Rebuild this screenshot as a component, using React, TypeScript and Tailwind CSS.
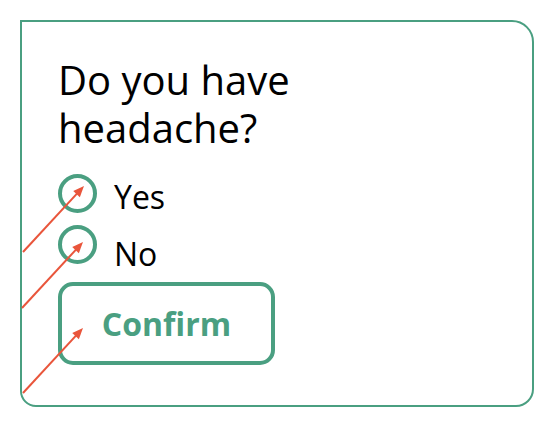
type Arrow = { x1: number; y1: number; x2: number; y2: number };

const arrows: Arrow[] = [
  { x1: 23, y1: 252, x2: 84, y2: 186 },
  { x1: 22, y1: 308, x2: 83, y2: 242 },
  { x1: 23, y1: 393, x2: 83, y2: 328 },
];

function ArrowMark({ x1, y1, x2, y2 }: Arrow) {
  const len = Math.hypot(x2 - x1, y2 - y1);
  const ux = (x2 - x1) / len;
  const uy = (y2 - y1) / len;
  const head = 11;
  const half = 4.5;
  const bx = x2 - ux * head;
  const by = y2 - uy * head;
  const pts = [
    `${x2},${y2}`,
    `${bx - uy * half},${by + ux * half}`,
    `${bx + uy * half},${by - ux * half}`,
  ].join(' ');
  return (
    <g>
      <line x1={x1} y1={y1} x2={bx + ux * 2} y2={by + uy * 2} stroke="#e9553b" strokeWidth={2} />
      <polygon points={pts} fill="#e9553b" />
    </g>
  );
}

function Radio({ label, labelTop }: { label: string; labelTop: string }) {
  return (
    <label className="flex items-start gap-[17px] cursor-pointer">
      <span className="w-[39px] h-[39px] rounded-full border-4 border-[#4a9f81] shrink-0" />
      <span className={`text-[32px] leading-[36px] text-black ${labelTop}`}>{label}</span>
    </label>
  );
}

export default function App() {
  return (
    <div
      className="relative w-[556px] h-[424px] bg-white pl-[20px] pt-[20px]"
      style={{ fontFamily: '"Open Sans", "Noto Sans", sans-serif' }}
    >
      <div className="w-[514px] h-[387px] border-2 border-[#4a9f81] rounded-tl-none rounded-tr-[22px] rounded-br-[18px] rounded-bl-[16px] pl-[36px] pt-[34px] flex flex-col items-start">
        <h1 className="w-[270px] text-[40px] leading-[48px] font-normal text-black">Do you have headache?</h1>
        <div className="mt-[22px] flex flex-col gap-[10px]">
          <Radio label="Yes" labelTop="mt-[5px]" />
          <Radio label="No" labelTop="mt-[11px]" />
        </div>
        <button className="mt-[10px] w-[217px] h-[83px] rounded-[15px] border-4 border-[#4a9f81] text-[32px] font-bold text-[#4a9f81] flex items-center justify-center">
          Confirm
        </button>
      </div>
      <svg className="absolute left-0 top-0 pointer-events-none" width={556} height={424}>
        {arrows.map((a, i) => (
          <ArrowMark key={i} {...a} />
        ))}
      </svg>
    </div>
  );
}
